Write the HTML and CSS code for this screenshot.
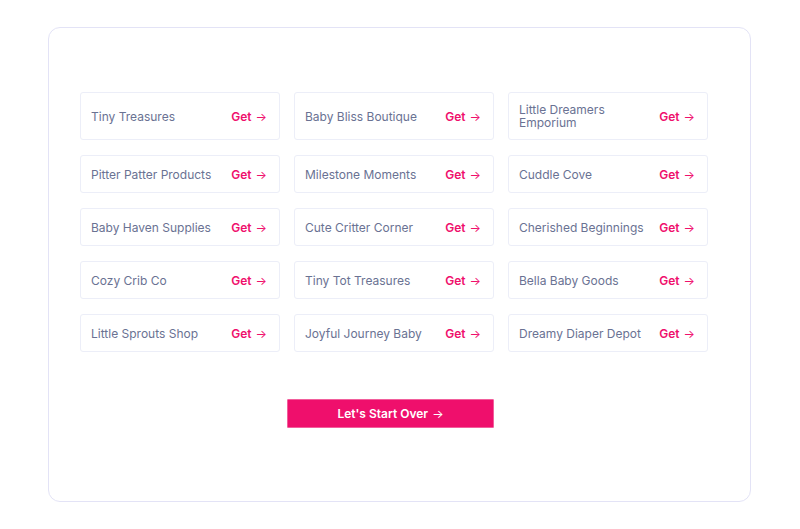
FILE: index.html
```html
<!DOCTYPE html>
<html lang="en">
<head>
<meta charset="utf-8">
<title>Baby Stores</title>
<link rel="stylesheet" href="styles.css">
</head>
<body>
<main class="panel">
  <div class="grid">
    <div class="store"><span class="name">Tiny Treasures</span><a class="get" href="#">Get <span class="arrow">&rarr;</span></a></div>
    <div class="store"><span class="name">Baby Bliss Boutique</span><a class="get" href="#">Get <span class="arrow">&rarr;</span></a></div>
    <div class="store"><span class="name">Little Dreamers Emporium</span><a class="get" href="#">Get <span class="arrow">&rarr;</span></a></div>
    <div class="store"><span class="name">Pitter Patter Products</span><a class="get" href="#">Get <span class="arrow">&rarr;</span></a></div>
    <div class="store"><span class="name">Milestone Moments</span><a class="get" href="#">Get <span class="arrow">&rarr;</span></a></div>
    <div class="store"><span class="name">Cuddle Cove</span><a class="get" href="#">Get <span class="arrow">&rarr;</span></a></div>
    <div class="store"><span class="name">Baby Haven Supplies</span><a class="get" href="#">Get <span class="arrow">&rarr;</span></a></div>
    <div class="store"><span class="name">Cute Critter Corner</span><a class="get" href="#">Get <span class="arrow">&rarr;</span></a></div>
    <div class="store"><span class="name">Cherished Beginnings</span><a class="get" href="#">Get <span class="arrow">&rarr;</span></a></div>
    <div class="store"><span class="name">Cozy Crib Co</span><a class="get" href="#">Get <span class="arrow">&rarr;</span></a></div>
    <div class="store"><span class="name">Tiny Tot Treasures</span><a class="get" href="#">Get <span class="arrow">&rarr;</span></a></div>
    <div class="store"><span class="name">Bella Baby Goods</span><a class="get" href="#">Get <span class="arrow">&rarr;</span></a></div>
    <div class="store"><span class="name">Little Sprouts Shop</span><a class="get" href="#">Get <span class="arrow">&rarr;</span></a></div>
    <div class="store"><span class="name">Joyful Journey Baby</span><a class="get" href="#">Get <span class="arrow">&rarr;</span></a></div>
    <div class="store"><span class="name">Dreamy Diaper Depot</span><a class="get" href="#">Get <span class="arrow">&rarr;</span></a></div>
  </div>
  <div class="actions">
    <button class="restart" type="button">Let's Start Over <span class="arrow">&rarr;</span></button>
  </div>
</main>
</body>
</html>
```

FILE: styles.css
```css
* { box-sizing: border-box; }
html, body { margin: 0; padding: 0; background: #ffffff; }
body {
  font-family: "Inter", "Open Sans", "Liberation Sans", sans-serif;
  padding: 27px 0 0 48px;
}
.panel {
  width: 703px;
  height: 475px;
  border: 1px solid #e3e3f6;
  border-radius: 12px;
  padding: 64px 42px 0 31px;
}
.grid {
  display: grid;
  grid-template-columns: repeat(3, 200px);
  column-gap: 14px;
  row-gap: 15px;
}
.store {
  display: flex;
  align-items: center;
  justify-content: space-between;
  border: 1px solid #eceef8;
  border-radius: 3px;
  padding: 10px 12px 10px 10px;
  min-height: 38px;
}
.name {
  color: #6a7293;
  font-size: 12px;
  line-height: 13px;
  padding-right: 6px;
}
.get {
  color: #ef0f6c;
  font-weight: 600;
  font-size: 12px;
  line-height: 13px;
  text-decoration: none;
  white-space: nowrap;
}
.arrow {
  font-weight: 400;
  font-size: 12px;
  margin-left: 1px;
}
.actions {
  display: flex;
  justify-content: center;
  padding: 47px 7px 0 0;
}
.restart {
  width: 207px;
  height: 29px;
  background: #ef0f6c;
  border: 1px solid #f25e9c;
  border-radius: 1px;
  color: #ffffff;
  font-family: inherit;
  font-weight: 600;
  font-size: 12px;
  padding: 0;
  cursor: pointer;
}
```
